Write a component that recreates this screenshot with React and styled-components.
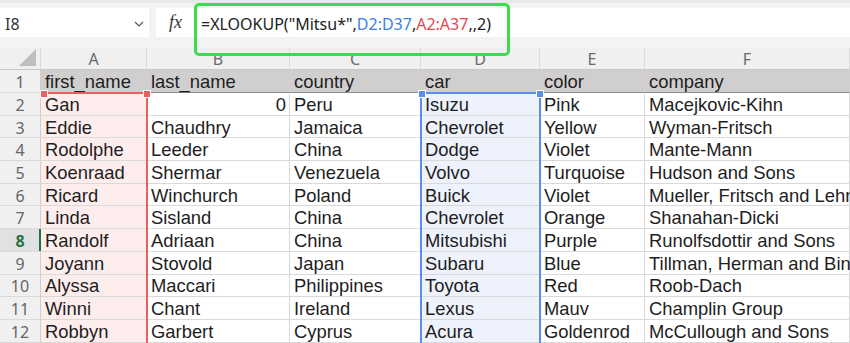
import styled, { createGlobalStyle } from "styled-components";

const GlobalStyle = createGlobalStyle`
    html, body {
        margin: 0;
        padding: 0;
        background: #ffffff;
        overflow: hidden;
    }
`;

const COLS = [41, 106, 143, 131, 119, 105, 205];
const ROW_H = 22.7;

const rows = [
    ["first_name", "last_name", "country", "car", "color", "company"],
    ["Gan", 0, "Peru", "Isuzu", "Pink", "Macejkovic-Kihn"],
    ["Eddie", "Chaudhry", "Jamaica", "Chevrolet", "Yellow", "Wyman-Fritsch"],
    ["Rodolphe", "Leeder", "China", "Dodge", "Violet", "Mante-Mann"],
    ["Koenraad", "Shermar", "Venezuela", "Volvo", "Turquoise", "Hudson and Sons"],
    ["Ricard", "Winchurch", "Poland", "Buick", "Violet", "Mueller, Fritsch and Lehner"],
    ["Linda", "Sisland", "China", "Chevrolet", "Orange", "Shanahan-Dicki"],
    ["Randolf", "Adriaan", "China", "Mitsubishi", "Purple", "Runolfsdottir and Sons"],
    ["Joyann", "Stovold", "Japan", "Subaru", "Blue", "Tillman, Herman and Bins"],
    ["Alyssa", "Maccari", "Philippines", "Toyota", "Red", "Roob-Dach"],
    ["Winni", "Chant", "Ireland", "Lexus", "Mauv", "Champlin Group"],
    ["Robbyn", "Garbert", "Cyprus", "Acura", "Goldenrod", "McCullough and Sons"],
];

const Page = styled.div`
    position: relative;
    width: 850px;
    height: 343px;
    overflow: hidden;
    background: #ffffff;
`;

const FormulaBar = styled.div`
    display: flex;
    align-items: flex-start;
    height: 48px;
    padding-top: 5px;
    box-sizing: border-box;
    background: #f3f3f3;
    border-top: 3px solid #e9e9e9;
`;

const NameBox = styled.div`
    display: flex;
    align-items: center;
    justify-content: space-between;
    width: 149px;
    height: 29px;
    padding: 2px 5px 0 5px;
    box-sizing: border-box;
    background: #ffffff;
    font-family: "Noto Sans", sans-serif;
    font-size: 16px;
    color: #333;
`;

const FxBox = styled.div`
    display: flex;
    align-items: center;
    justify-content: center;
    width: 39px;
    height: 29px;
    margin-left: 7px;
    background: #ffffff;
    font-family: "Liberation Serif", serif;
    font-style: italic;
    font-size: 18px;
    color: #333;
`;

const FormulaInput = styled.div`
    flex: 1;
    display: flex;
    align-items: center;
    height: 29px;
    margin-left: 1px;
    padding: 3px 0 0 5px;
    box-sizing: border-box;
    background: #ffffff;
    font-family: "Noto Sans", sans-serif;
    font-size: 16px;
    color: #222;
    white-space: nowrap;
`;

const Ref = styled.span`
    color: ${(p) => (p.$tone === "red" ? "#e5484d" : "#3e7fe8")};
`;

const Callout = styled.div`
    position: absolute;
    left: 194px;
    top: 3px;
    width: 316px;
    height: 53px;
    box-sizing: border-box;
    border: 3px solid #3ddc4f;
    border-radius: 5px;
    pointer-events: none;
`;

const Grid = styled.div`
    position: relative;
    display: grid;
    grid-template-columns: ${COLS.map((c) => c + "px").join(" ")};
    grid-template-rows: 22px 23px repeat(11, ${ROW_H}px);
    font-family: "Liberation Sans", Arial, sans-serif;
`;

const ColHead = styled.div`
    display: flex;
    align-items: center;
    justify-content: center;
    background: #f0f0f0;
    border-right: 1px solid #dadada;
    border-bottom: 1px solid #c8c8c8;
    font-family: "Noto Sans", sans-serif;
    font-size: 16px;
    color: #6a6a6a;
    box-sizing: border-box;
`;

const Corner = styled(ColHead)`
    position: relative;
    &::after {
        content: "";
        position: absolute;
        right: 4px;
        bottom: 3px;
        border-style: solid;
        border-width: 0 0 17px 17px;
        border-color: transparent transparent #bfbfbf transparent;
    }
`;

const RowHead = styled.div`
    position: relative;
    display: flex;
    align-items: center;
    justify-content: center;
    padding-top: 2px;
    background: ${(p) => (p.$active ? "#e1e1e1" : "#f0f0f0")};
    border-right: 1px solid #cfcfcf;
    border-bottom: 1px solid #dadada;
    box-sizing: border-box;
    font-family: "Noto Sans", sans-serif;
    font-size: 16px;
    font-weight: ${(p) => (p.$active ? 700 : 400)};
    color: ${(p) => (p.$active ? "#217346" : "#666")};

    &::after {
        content: "";
        display: ${(p) => (p.$active ? "block" : "none")};
        position: absolute;
        right: -1px;
        top: 0;
        bottom: 0;
        width: 2px;
        background: #217346;
    }
`;

const fills = { red: "#fdeded", blue: "#edf2fc" };

const Cell = styled.div`
    display: flex;
    align-items: center;
    justify-content: ${(p) => (p.$num ? "flex-end" : "flex-start")};
    padding: 2px 3px 0 4px;
    box-sizing: border-box;
    background: ${(p) => (p.$head ? "#d0cece" : fills[p.$hl] || "#ffffff")};
    border-right: 1px solid ${(p) => (p.$head ? "#d0cece" : "#d9d9d9")};
    border-bottom: 1px solid ${(p) => (p.$head ? "#8c8c8c" : "#d9d9d9")};
    font-size: 18.4px;
    color: #1e1e1e;
    white-space: nowrap;
    overflow: visible;
    min-width: 0;
`;

const Range = styled.div`
    position: absolute;
    left: ${(p) => p.$x}px;
    top: 44px;
    width: ${(p) => p.$w}px;
    height: 400px;
    box-sizing: border-box;
    border: 2px solid ${(p) => p.$color};
    border-left-width: ${(p) => (p.$noLeft ? 0 : 2)}px;
    pointer-events: none;

    &::before,
    &::after {
        content: "";
        position: absolute;
        top: -3px;
        width: 6px;
        height: 6px;
        background: ${(p) => p.$color};
        outline: 1px solid #ffffff;
    }
    &::before {
        left: ${(p) => (p.$noLeft ? 0 : -3)}px;
    }
    &::after {
        right: -4px;
    }
`;

function Chevron() {
    return (
        <svg width="10" height="6" viewBox="0 0 10 6" fill="none">
            <path d="M1 1l4 4 4-4" stroke="#555" strokeWidth="1.2" />
        </svg>
    );
}

function Row({ index, cells }) {
    const n = index + 1;
    const head = index === 0;
    return (
        <>
            <RowHead $active={n === 8}>{n}</RowHead>
            {cells.map((c, j) => (
                <Cell
                    key={j}
                    $head={head}
                    $num={typeof c === "number"}
                    $hl={head ? null : j === 0 ? "red" : j === 3 ? "blue" : null}
                >
                    {c}
                </Cell>
            ))}
        </>
    );
}

export default function App() {
    const letters = ["A", "B", "C", "D", "E", "F"];
    return (
        <Page>
            <GlobalStyle />
            <FormulaBar>
                <NameBox>
                    <span>I8</span>
                    <Chevron />
                </NameBox>
                <FxBox>fx</FxBox>
                <FormulaInput>
                    =XLOOKUP("Mitsu*",<Ref>D2:D37</Ref>,<Ref $tone="red">A2:A37</Ref>,,2)
                </FormulaInput>
            </FormulaBar>
            <Grid>
                <Corner />
                {letters.map((l) => (
                    <ColHead key={l}>{l}</ColHead>
                ))}
                {rows.map((r, i) => (
                    <Row key={i} index={i} cells={r} />
                ))}
                <Range $x={41} $w={107} $color="#e8605f" $noLeft />
                <Range $x={420} $w={121} $color="#5b8def" />
            </Grid>
            <Callout />
        </Page>
    );
}
